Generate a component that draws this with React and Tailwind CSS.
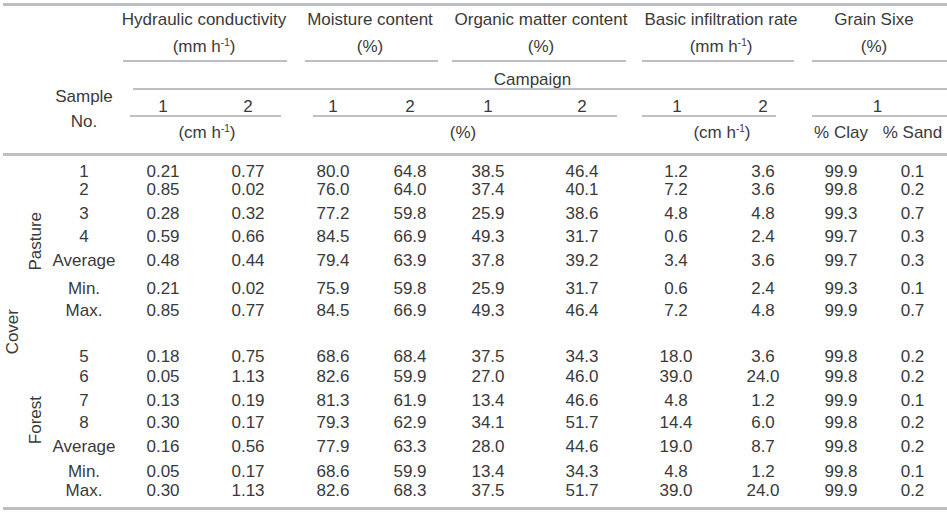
import React from "react";

const COLS = "grid grid-cols-[24px_26px_68px_90px_80px_90px_64px_92px_96px_92px_82px_74px_69px]";
const ROWSTART = [
  "row-start-1", "row-start-2", "row-start-3", "row-start-4", "row-start-5",
  "row-start-6", "row-start-7", "row-start-8", "row-start-9", "row-start-10",
  "row-start-11", "row-start-12", "row-start-13", "row-start-14", "row-start-15",
];
const COLSTART = [
  "col-start-3", "col-start-4", "col-start-5", "col-start-6", "col-start-7",
  "col-start-8", "col-start-9", "col-start-10", "col-start-11", "col-start-12", "col-start-13",
];

const pasture = [
  ["1", "0.21", "0.77", "80.0", "64.8", "38.5", "46.4", "1.2", "3.6", "99.9", "0.1"],
  ["2", "0.85", "0.02", "76.0", "64.0", "37.4", "40.1", "7.2", "3.6", "99.8", "0.2"],
  ["3", "0.28", "0.32", "77.2", "59.8", "25.9", "38.6", "4.8", "4.8", "99.3", "0.7"],
  ["4", "0.59", "0.66", "84.5", "66.9", "49.3", "31.7", "0.6", "2.4", "99.7", "0.3"],
  ["Average", "0.48", "0.44", "79.4", "63.9", "37.8", "39.2", "3.4", "3.6", "99.7", "0.3"],
  ["Min.", "0.21", "0.02", "75.9", "59.8", "25.9", "31.7", "0.6", "2.4", "99.3", "0.1"],
  ["Max.", "0.85", "0.77", "84.5", "66.9", "49.3", "46.4", "7.2", "4.8", "99.9", "0.7"],
];
const forest = [
  ["5", "0.18", "0.75", "68.6", "68.4", "37.5", "34.3", "18.0", "3.6", "99.8", "0.2"],
  ["6", "0.05", "1.13", "82.6", "59.9", "27.0", "46.0", "39.0", "24.0", "99.8", "0.2"],
  ["7", "0.13", "0.19", "81.3", "61.9", "13.4", "46.6", "4.8", "1.2", "99.9", "0.1"],
  ["8", "0.30", "0.17", "79.3", "62.9", "34.1", "51.7", "14.4", "6.0", "99.8", "0.2"],
  ["Average", "0.16", "0.56", "77.9", "63.3", "28.0", "44.6", "19.0", "8.7", "99.8", "0.2"],
  ["Min.", "0.05", "0.17", "68.6", "59.9", "13.4", "34.3", "4.8", "1.2", "99.8", "0.1"],
  ["Max.", "0.30", "1.13", "82.6", "68.3", "37.5", "51.7", "39.0", "24.0", "99.9", "0.2"],
];

const Sup = () => <sup className="text-[10px] top-[-6px]">-1</sup>;
const Line = ({ className }) => <div className={"self-end h-[2px] bg-[#bdbfc4] " + className} />;

function DataRows({ rows, start }) {
  return rows.flatMap((r, i) =>
    r.map((v, j) => (
      <div
        key={start + "-" + i + "-" + j}
        className={ROWSTART[start + i] + " " + COLSTART[j] + " text-center leading-[18px] whitespace-nowrap"}
      >
        {v}
      </div>
    ))
  );
}

export default function App() {
  return (
    <div
      className="w-[947px] h-[513px] bg-white overflow-hidden text-[17px] text-[#3a3a3a]"
      style={{ fontFamily: '"Liberation Sans", Arial, sans-serif' }}
    >
      <div className="h-[3px]" />
      <div className="h-[3px] ml-[3px] bg-[#bdbfc4]" />

      {/* Header */}
      <div className={COLS + " grid-rows-[56px_28px_27px_36px]"}>
        <div className="col-start-3 row-start-1 row-span-4 pt-[78px] text-center leading-[25px]">
          <div>Sample</div>
          <div>No.</div>
        </div>

        {/* row 1 group titles */}
        <div className="col-start-4 col-span-2 row-start-1 text-center leading-[27px] whitespace-nowrap pl-[2px]">
          <div>Hydraulic conductivity</div>
          <div>(mm h<Sup />)</div>
        </div>
        <Line className="col-start-4 col-span-2 row-start-1 ml-[5px] mr-[1px]" />
        <div className="col-start-6 col-span-2 row-start-1 text-center leading-[27px] whitespace-nowrap pl-[10px]">
          <div>Moisture content</div>
          <div>(%)</div>
        </div>
        <Line className="col-start-6 col-span-2 row-start-1 ml-[17px] mr-[4px]" />
        <div className="col-start-8 col-span-2 row-start-1 text-center leading-[27px] whitespace-nowrap pl-[10px]">
          <div>Organic matter content</div>
          <div>(%)</div>
        </div>
        <Line className="col-start-8 col-span-2 row-start-1 ml-[10px] mr-[4px]" />
        <div className="col-start-10 col-span-2 row-start-1 text-center leading-[27px] whitespace-nowrap pl-[8px]">
          <div>Basic infiltration rate</div>
          <div>(mm h<Sup />)</div>
        </div>
        <Line className="col-start-10 col-span-2 row-start-1 ml-[12px] mr-[10px]" />
        <div className="col-start-12 col-span-2 row-start-1 text-center leading-[27px] whitespace-nowrap pr-[3px]">
          <div>Grain Sixe</div>
          <div>(%)</div>
        </div>
        <Line className="col-start-12 col-span-2 row-start-1 ml-[8px]" />

        {/* row 2 campaign */}
        <div className="col-start-4 col-span-10 row-start-2 text-center leading-[19px] pt-[8px]">Campaign</div>
        <Line className="col-start-4 col-span-10 row-start-2 ml-[15px]" />

        {/* row 3 numbers */}
        <div className="col-start-4 row-start-3 text-center leading-[19px] pt-[7px]">1</div>
        <div className="col-start-5 row-start-3 text-center leading-[19px] pt-[7px]">2</div>
        <div className="col-start-6 row-start-3 text-center leading-[19px] pt-[7px]">1</div>
        <div className="col-start-7 row-start-3 text-center leading-[19px] pt-[7px]">2</div>
        <div className="col-start-8 row-start-3 text-center leading-[19px] pt-[7px]">1</div>
        <div className="col-start-9 row-start-3 text-center leading-[19px] pt-[7px]">2</div>
        <div className="col-start-10 row-start-3 text-center leading-[19px] pt-[7px] pl-[2px]">1</div>
        <div className="col-start-11 row-start-3 text-center leading-[19px] pt-[7px]">2</div>
        <div className="col-start-12 col-span-2 row-start-3 text-center leading-[19px] pt-[7px] pl-[4px]">1</div>
        <Line className="col-start-4 col-span-2 row-start-3 ml-[12px] mr-[7px]" />
        <Line className="col-start-6 col-span-4 row-start-3 ml-[25px] mr-[13px]" />
        <Line className="col-start-10 col-span-2 row-start-3 ml-[12px] mr-[28px]" />
        <Line className="col-start-12 col-span-2 row-start-3 ml-[8px]" />

        {/* row 4 units */}
        <div className="col-start-4 col-span-2 row-start-4 text-center leading-[19px] pt-[6px] pl-[8px] whitespace-nowrap">(cm h<Sup />)</div>
        <div className="col-start-6 col-span-4 row-start-4 text-center leading-[19px] pt-[6px] pl-[8px]">(%)</div>
        <div className="col-start-10 col-span-2 row-start-4 text-center leading-[19px] pt-[6px] pl-[10px] whitespace-nowrap">(cm h<Sup />)</div>
        <div className="col-start-12 row-start-4 text-center leading-[19px] pt-[6px] whitespace-nowrap">% Clay</div>
        <div className="col-start-13 row-start-4 text-center leading-[19px] pt-[6px] whitespace-nowrap">% Sand</div>
      </div>

      <div className="h-[3px] ml-[3px] bg-[#bdbfc4]" />

      {/* Body */}
      <div
        className={
          COLS +
          " grid-rows-[18px_24px_23px_24px_28px_22px_18px_28px_20px_24px_22px_24px_25px_19px_18px] pt-[7px] pb-[7px]"
        }
      >
        <div className="col-start-1 row-start-1 row-span-15 flex items-center justify-center">
          <span className="[writing-mode:vertical-rl] rotate-180 leading-[17px]">Cover</span>
        </div>
        <div className="col-start-2 row-start-1 row-span-7 flex items-center justify-center pr-[4px]">
          <span className="[writing-mode:vertical-rl] rotate-180 leading-[17px]">Pasture</span>
        </div>
        <div className="col-start-2 row-start-9 row-span-7 flex items-center justify-center pb-[8px] pr-[4px]">
          <span className="[writing-mode:vertical-rl] rotate-180 leading-[17px]">Forest</span>
        </div>
        <DataRows rows={pasture} start={0} />
        <DataRows rows={forest} start={8} />
      </div>

      <div className="h-[3px] ml-[3px] bg-[#bdbfc4]" />
    </div>
  );
}
